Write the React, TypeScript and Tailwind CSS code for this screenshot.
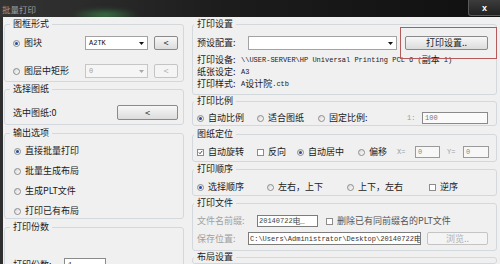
import React from "react";

const CJK = "font-['Noto_Sans_CJK_SC','Noto_Sans',sans-serif]";
const MONO = "font-['Liberation_Mono','Noto_Sans_CJK_SC',monospace]";

function Radio({ checked = false }: { checked?: boolean }) {
  return (
    <span className="flex h-[7px] w-[7px] shrink-0 items-center justify-center rounded-full border border-[#8c8c8c] bg-[linear-gradient(135deg,#d6d6d6,#ffffff)]">
      {checked && <span className="h-[3px] w-[3px] rounded-full bg-[#1f4f9e]" />}
    </span>
  );
}

function Check({ checked = false }: { checked?: boolean }) {
  return (
    <span className="flex h-[7px] w-[7px] shrink-0 items-center justify-center border border-[#8c8c8c] bg-white">
      {checked && (
        <svg width="7" height="7" viewBox="0 0 7 7">
          <path d="M1.2 3.4 L2.8 5.2 L5.9 1.2" stroke="#1a1a1a" strokeWidth="1.1" fill="none" />
        </svg>
      )}
    </span>
  );
}

function Opt({
  type = "radio",
  checked = false,
  label,
  className = "",
  labelClass = "text-[#1a1a1a]",
}: {
  type?: "radio" | "check";
  checked?: boolean;
  label: string;
  className?: string;
  labelClass?: string;
}) {
  return (
    <div className={`flex items-center gap-[4px] ${className}`}>
      {type === "radio" ? <Radio checked={checked} /> : <Check checked={checked} />}
      <span className={`whitespace-nowrap text-[9px] leading-[12px] ${labelClass}`}>{label}</span>
    </div>
  );
}

function Arrow({ disabled = false }: { disabled?: boolean }) {
  return (
    <svg width="5" height="3" viewBox="0 0 5 3" className="mr-[3px] shrink-0">
      <polygon points="0,0 5,0 2.5,3" fill={disabled ? "#a8a8a8" : "#111"} />
    </svg>
  );
}

function Combo({
  value,
  disabled = false,
  className = "",
}: {
  value: string;
  disabled?: boolean;
  className?: string;
}) {
  return (
    <div
      className={`flex items-center border ${
        disabled ? "border-[#c6c6c6] bg-[#f5f5f5] text-[#a0a0a0]" : "border-[#a3a3a3] bg-white text-[#111]"
      } ${className}`}
    >
      <span className={`flex-1 pl-[3px] text-[7px] leading-[10px] ${MONO}`}>{value}</span>
      <Arrow disabled={disabled} />
    </div>
  );
}

function Btn({
  children,
  disabled = false,
  className = "",
}: {
  children: React.ReactNode;
  disabled?: boolean;
  className?: string;
}) {
  return (
    <div
      className={`flex items-center justify-center rounded-[2px] border text-[9px] leading-[10px] ${
        disabled
          ? "border-[#c4c4c4] bg-[#f4f4f4] text-[#b0b0b0]"
          : "border-[#8a8a8a] bg-[linear-gradient(180deg,#f7f7f7,#dcdcdc)] text-[#222]"
      } ${className}`}
    >
      {children}
    </div>
  );
}

function Group({
  title,
  className = "",
  legendClass = "",
  children,
}: {
  title: string;
  className?: string;
  legendClass?: string;
  children?: React.ReactNode;
}) {
  return (
    <fieldset className={`rounded-[3px] border border-[#d3d8dc] ${className}`}>
      <legend className={`px-[3px] text-[9px] leading-[12px] text-[#1a1a1a] ${legendClass}`}>{title}</legend>
      {children}
    </fieldset>
  );
}

export default function App() {
  return (
    <div className={`relative h-[264px] w-[500px] overflow-hidden bg-[#f0f0f0] text-[#1a1a1a] ${CJK}`}>
      {/* Title bar */}
      <div className="relative flex h-[17px] items-center overflow-hidden bg-[linear-gradient(90deg,#343434,#1c1c1c_45%,#101010)]">
        <div className="absolute left-[70px] top-[8px] h-[14px] w-[70px] rounded-full bg-[radial-gradient(ellipse_at_center,rgba(70,170,90,0.6),transparent_70%)] blur-[2px]" />
        <span className="relative ml-[2px] text-[8.5px] leading-[10px] text-[#9c9c9c]">批量打印</span>
        <div className="relative ml-auto flex h-[16px] w-[32px] items-center justify-center self-start rounded-bl-[3px] border-b border-l border-[#5a5a5a] bg-[linear-gradient(180deg,#3c3c3c,#222222)]">
          <span className="font-['Liberation_Sans',sans-serif] text-[9px] font-bold leading-[10px] text-white">x</span>
        </div>
      </div>

      {/* Body */}
      <div className="flex h-[247px] border-l-[3px] border-[#2e2e2e]">
        {/* Left column */}
        <div className="ml-[1px] flex w-[180px] flex-col pt-[1px]">
          <Group title="图框形式" legendClass="ml-[5px]" className="pb-[3px]">
            <div className="mt-[6px] flex h-[14px] items-center pl-[8px]">
              <Opt checked label="图块" className="w-[72px]" />
              <Combo value="A2TK" className="h-[14px] w-[63px]" />
              <Btn className="ml-[6px] h-[14px] w-[24px]">&lt;</Btn>
            </div>
            <div className="mt-[14px] flex h-[14px] items-center pl-[8px]">
              <Opt label="图层中矩形" className="w-[72px]" />
              <Combo value="0" disabled className="h-[14px] w-[63px]" />
              <Btn disabled className="ml-[6px] h-[14px] w-[24px]">&lt;</Btn>
            </div>
          </Group>

          <Group title="选择图纸" legendClass="ml-[5px]" className="mt-[1px] pb-[4px]">
            <div className="mt-[10px] flex h-[15px] items-center justify-between pl-[8px] pr-[5px]">
              <span className="text-[9px] leading-[12px]">选中图纸:0</span>
              <Btn className="h-[15px] w-[61px]">&lt;</Btn>
            </div>
          </Group>

          <Group title="输出选项" legendClass="ml-[5px]" className="mt-[2px]">
            <div className="mt-[5px] flex flex-col gap-[6px] pl-[9px]">
              <Opt checked label="直接批量打印" className="h-[14px]" />
              <Opt label="批量生成布局" className="h-[14px]" />
              <Opt label="生成PLT文件" className="h-[14px]" />
              <Opt label="打印已有布局" className="h-[14px]" />
            </div>
          </Group>

          <Group title="打印份数" legendClass="ml-[5px]" className="mt-[2px] pb-[6px]">
            <div className="mt-[25px] flex h-[14px] items-center pl-[8px]">
              <span className="w-[51px] text-[9px] leading-[12px]">打印份数:</span>
              <div className={`flex h-[14px] w-[42px] items-center border border-[#8a8a8a] bg-white pl-[3px] text-[7px] ${MONO}`}>1</div>
            </div>
          </Group>
        </div>

        {/* Right column */}
        <div className="ml-[8px] flex w-[305px] flex-col pt-[1px]">
          <Group title="打印设置" legendClass="ml-[1px]" className="pb-[4px]">
            <div className="mt-[6px] flex h-[14px] items-center pl-[4px]">
              <span className="w-[51px] whitespace-nowrap text-[9px] leading-[12px]">预设配置:</span>
              <Combo value="" className="h-[14px] w-[149px]" />
              <Btn className="ml-[8px] h-[14px] w-[83px]">打印设置..</Btn>
            </div>
            <div className="mt-[4px] flex flex-col pl-[4px]">
              <div className="flex h-[12px] items-center whitespace-nowrap">
                <span className="w-[44px] text-[9px] leading-[12px]">打印设备:</span>
                <span className={`text-[7px] leading-[12px] ${MONO}`}>\\USER-SERVER\HP Universal Printing PCL 6 (</span>
                <span className="text-[9px] leading-[12px]">副本</span>
                <span className={`text-[7px] leading-[12px] ${MONO}`}>&nbsp;1)</span>
              </div>
              <div className="flex h-[12px] items-center whitespace-nowrap">
                <span className="w-[44px] text-[9px] leading-[12px]">纸张设定:</span>
                <span className={`text-[7px] leading-[12px] ${MONO}`}>A3</span>
              </div>
              <div className="flex h-[12px] items-center whitespace-nowrap">
                <span className="w-[44px] text-[9px] leading-[12px]">打印样式:</span>
                <span className={`text-[7px] leading-[12px] ${MONO}`}>A</span>
                <span className="text-[9px] leading-[12px]">设计院</span>
                <span className={`text-[7px] leading-[12px] ${MONO}`}>.ctb</span>
              </div>
            </div>
          </Group>

          <Group title="打印比例" legendClass="ml-[1px]" className="pb-[1px]">
            <div className="mt-[5px] flex h-[12px] items-center pl-[4px]">
              <Opt checked label="自动比例" className="w-[60px]" />
              <Opt label="适合图纸" className="w-[61px]" />
              <Opt label="固定比例:" className="w-[89px]" />
              <span className={`w-[15px] text-[7px] leading-[12px] text-[#9a9a9a] ${MONO}`}>1:</span>
              <div className={`flex h-[12px] w-[66px] items-center border border-[#8a8a8a] bg-[#fafafa] pl-[2px] text-[7px] text-[#777] ${MONO}`}>100</div>
            </div>
          </Group>

          <Group title="图纸定位" legendClass="ml-[1px]" className="mt-[2px] pb-[3px]">
            <div className="mt-[6px] flex h-[12px] items-center pl-[4px]">
              <Opt type="check" checked label="自动旋转" className="w-[60px]" />
              <Opt type="check" label="反向" className="w-[40px]" />
              <Opt checked label="自动居中" className="w-[61px]" />
              <Opt label="偏移" className="w-[39px]" />
              <span className={`w-[18px] text-[7px] leading-[12px] text-[#a0a0a0] ${MONO}`}>X=</span>
              <div className={`flex h-[12px] w-[25px] items-center border border-[#9a9a9a] bg-[#f7f7f7] pl-[2px] text-[7px] text-[#8a8a8a] ${MONO}`}>0</div>
              <span className={`ml-[7px] w-[16px] text-[7px] leading-[12px] text-[#a0a0a0] ${MONO}`}>Y=</span>
              <div className={`flex h-[12px] w-[26px] items-center border border-[#9a9a9a] bg-[#f7f7f7] pl-[2px] text-[7px] text-[#8a8a8a] ${MONO}`}>0</div>
            </div>
          </Group>

          <Group title="打印顺序" legendClass="ml-[1px]" className="mt-[1px] pb-[2px]">
            <div className="mt-[6px] flex h-[12px] items-center pl-[4px]">
              <Opt checked label="选择顺序" className="w-[70px]" />
              <Opt label="左右，上下" className="w-[80px]" />
              <Opt label="上下，左右" className="w-[82px]" />
              <Opt type="check" label="逆序" />
            </div>
          </Group>

          <Group title="打印文件" legendClass="ml-[1px]" className="mt-[1px] pb-[5px]">
            <div className="mt-[6px] flex h-[12px] items-center pl-[4px]">
              <span className="w-[60px] whitespace-nowrap text-[9px] leading-[12px] text-[#a0a0a0]">文件名前缀:</span>
              <div className="flex h-[12px] w-[61px] items-center overflow-hidden whitespace-nowrap border border-[#7c7c7c] bg-white pl-[1px] text-[#444]">
                <span className={`text-[7px] leading-[10px] ${MONO}`}>20140722</span>
                <span className="text-[8px] leading-[10px]">电</span>
                <span className={`text-[7px] leading-[10px] ${MONO}`}>_</span>
              </div>
              <Opt type="check" label="删除已有同前缀名的PLT文件" labelClass="text-[#555]" className="ml-[8px]" />
            </div>
            <div className="mt-[5px] flex h-[13px] items-center pl-[4px]">
              <span className="w-[51px] whitespace-nowrap text-[9px] leading-[12px] text-[#a0a0a0]">保存位置:</span>
              <div className="flex h-[13px] w-[173px] items-center overflow-hidden whitespace-nowrap border border-[#7c7c7c] bg-white pl-[1px] text-[#333]">
                <span className={`text-[7px] leading-[10px] ${MONO}`}>C:\Users\Administrator\Desktop\20140722</span>
                <span className="text-[8px] leading-[10px]">电</span>
              </div>
              <Btn disabled className="ml-[6px] h-[13px] w-[61px]">浏览..</Btn>
            </div>
          </Group>

          <Group title="布局设置" legendClass="ml-[1px]" className="h-[30px]" />
        </div>
      </div>

      {/* Red highlight annotation around 打印设置 button */}
      <div className="absolute left-[400px] top-[27px] h-[32px] w-[97px] border border-[#b35a5a]" />
    </div>
  );
}
